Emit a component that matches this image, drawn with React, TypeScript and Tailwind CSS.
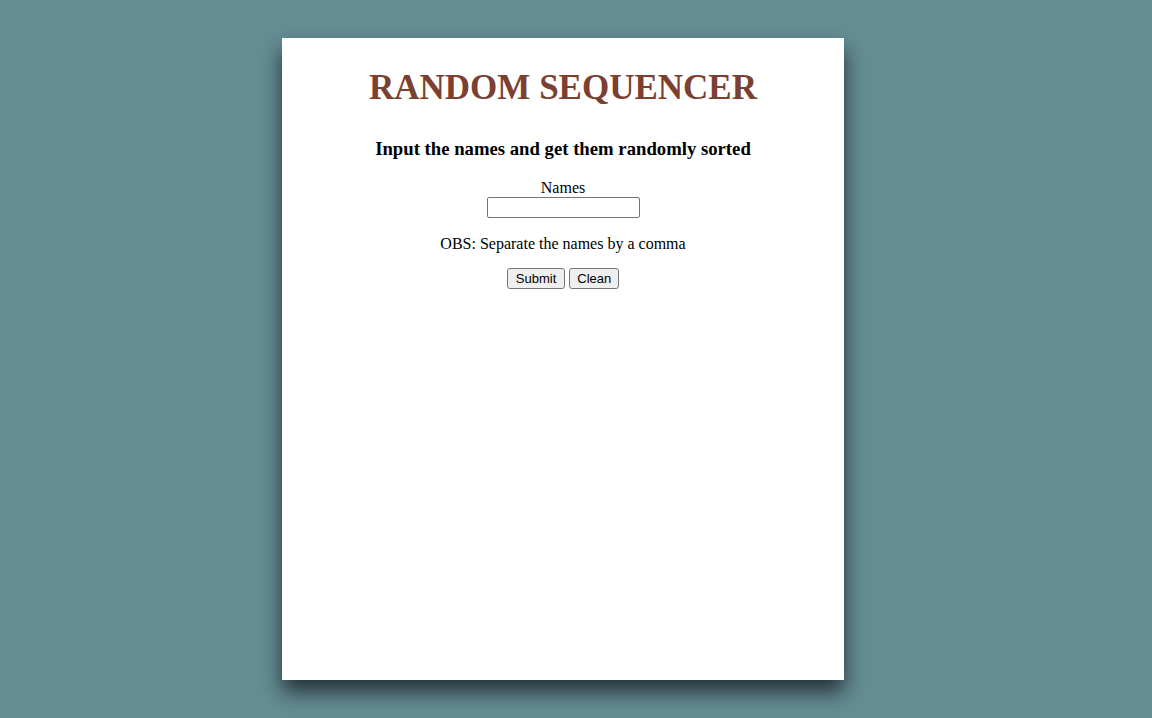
import { useState } from "react";

export default function App() {
  const [names, setNames] = useState("");

  return (
    <div className="min-h-screen bg-[#658d94] pt-[38px] font-['Liberation_Serif',serif] text-black">
      <div className="ml-[282px] w-[562px] h-[642px] bg-white shadow-[0_12px_20px_rgba(0,0,0,0.65)] flex flex-col items-center pt-[29px]">
        {/* Title */}
        <h1 className="text-[35px] leading-[41px] font-bold text-[#7b4030]">RANDOM SEQUENCER</h1>

        <h3 className="mt-[30px] text-[18.72px] leading-[22px] font-bold">
          Input the names and get them randomly sorted
        </h3>

        <label className="mt-[19px] text-[16px] leading-[18px]" htmlFor="names">
          Names
        </label>
        <input
          id="names"
          value={names}
          onChange={(e) => setNames(e.target.value)}
          className="w-[153px] h-[21px] border border-[#767676] rounded-[2px] px-[2px] text-[13px] font-['Liberation_Sans',sans-serif]"
        />

        <p className="mt-[17px] text-[16px] leading-[18px]">OBS: Separate the names by a comma</p>

        {/* Buttons */}
        <div className="mt-[15px] flex gap-[4px] font-['Liberation_Sans',sans-serif] text-[13px]">
          <button className="h-[21px] px-[8px] bg-[#efefef] border border-[#767676] rounded-[3px] leading-none">
            Submit
          </button>
          <button className="h-[21px] px-[7px] bg-[#efefef] border border-[#767676] rounded-[3px] leading-none" onClick={() => setNames("")}>
            Clean
          </button>
        </div>
      </div>
    </div>
  );
}
